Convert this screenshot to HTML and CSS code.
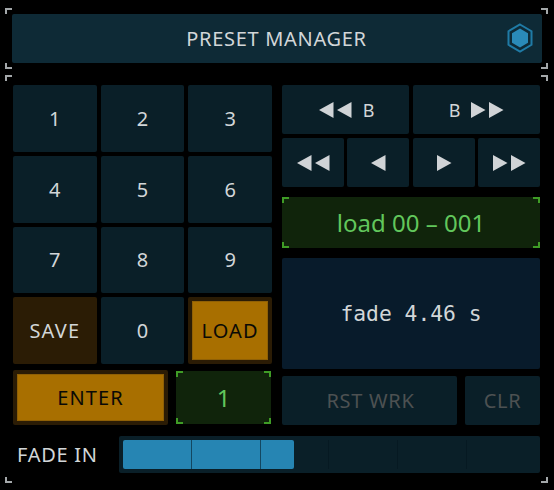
FILE: index.html
```html
<!DOCTYPE html>
<html lang="en">
<head>
  <meta charset="UTF-8">
  <meta name="viewport" content="width=device-width, initial-scale=1.0">
  <title>Preset Manager</title>
  <link rel="stylesheet" href="styles.css">
</head>
<body>

  <div class="frame frame-top">
    <i class="mark tl"></i><i class="mark tr"></i><i class="mark bl"></i><i class="mark br"></i>
    <div class="header">
      <span>PRESET MANAGER</span>
      <svg class="hex" width="26" height="30" viewBox="0 0 26 30">
        <polygon points="13,1.5 24.5,8.2 24.5,21.8 13,28.5 1.5,21.8 1.5,8.2" fill="none" stroke="#1f7ba6" stroke-width="2"/>
        <polygon points="13,5.5 21,10.2 21,19.8 13,24.5 5,19.8 5,10.2" fill="#2a8ab8"/>
      </svg>
    </div>
  </div>

  <div class="frame frame-main">
    <i class="mark tl"></i><i class="mark tr"></i><i class="mark bl"></i><i class="mark br"></i>

    <div class="columns">
      <div class="left">
        <div class="keypad">
          <button class="btn btn-num">1</button>
          <button class="btn btn-num">2</button>
          <button class="btn btn-num">3</button>
          <button class="btn btn-num">4</button>
          <button class="btn btn-num">5</button>
          <button class="btn btn-num">6</button>
          <button class="btn btn-num">7</button>
          <button class="btn btn-num">8</button>
          <button class="btn btn-num">9</button>
          <button class="btn btn-save">SAVE</button>
          <button class="btn btn-num">0</button>
          <button class="btn btn-amber">LOAD</button>
        </div>
        <div class="enter-row">
          <button class="btn btn-amber btn-enter">ENTER</button>
          <div class="lcd lcd-small">
            <i class="tick tl"></i><i class="tick tr"></i><i class="tick bl"></i><i class="tick br"></i>
            1
          </div>
        </div>
      </div>

      <div class="right">
        <div class="transport">
          <button class="btn btn-t btn-half btn-back">
            <svg width="33" height="16" viewBox="0 0 33 16"><polygon points="14.5,0 14.5,16 0,8"/><polygon points="32.5,0 32.5,16 18,8"/></svg>
            <span>B</span>
          </button>
          <button class="btn btn-t btn-half">
            <span>B</span>
            <svg width="33" height="16" viewBox="0 0 33 16"><polygon points="0,0 0,16 14.5,8"/><polygon points="18,0 18,16 32.5,8"/></svg>
          </button>
        </div>
        <div class="transport">
          <div class="pair">
            <button class="btn btn-t">
              <svg width="33" height="16" viewBox="0 0 33 16"><polygon points="14.5,0 14.5,16 0,8"/><polygon points="32.5,0 32.5,16 18,8"/></svg>
            </button>
            <button class="btn btn-t">
              <svg width="15" height="16" viewBox="0 0 15 16"><polygon points="14.5,0 14.5,16 0,8"/></svg>
            </button>
          </div>
          <div class="pair">
            <button class="btn btn-t">
              <svg width="15" height="16" viewBox="0 0 15 16"><polygon points="0,0 0,16 14.5,8"/></svg>
            </button>
            <button class="btn btn-t">
              <svg width="33" height="16" viewBox="0 0 33 16"><polygon points="0,0 0,16 14.5,8"/><polygon points="18,0 18,16 32.5,8"/></svg>
            </button>
          </div>
        </div>
        <div class="lcd lcd-wide">
          <i class="tick tl"></i><i class="tick tr"></i><i class="tick bl"></i><i class="tick br"></i>
          load 00 – 001
        </div>
        <div class="readout">fade 4.46 s</div>
        <div class="reset-row">
          <button class="btn btn-off btn-rst">RST WRK</button>
          <button class="btn btn-off btn-clr">CLR</button>
        </div>
      </div>
    </div>

    <div class="fade-row">
      <span class="fade-label">FADE IN</span>
      <div class="track">
        <div class="fill" style="width: 171px"></div>
        <div class="seg"></div>
        <div class="seg"></div>
        <div class="seg"></div>
        <div class="seg"></div>
        <div class="seg"></div>
        <div class="seg"></div>
      </div>
    </div>
  </div>

</body>
</html>
```

FILE: styles.css
```css
* {
  box-sizing: border-box;
}
body {
  margin: 0;
  background-color: #000;
  color: #d2d6d8;
  font-family: 'Noto Sans', 'Open Sans', sans-serif;
  font-size: 20px;
  letter-spacing: 0.7px;
  overflow: hidden;
}

/* section frames with the grey corner marks */
.frame {
  position: relative;
  width: 543px;
  margin-left: 5px;
}
.frame-top {
  margin-top: 8px;
  height: 61px;
  padding: 6px 6px 6px 7px;
}
.frame-main {
  margin-top: 6px;
  height: 408px;
  padding: 10px 8px 0 8px;
}
.mark {
  position: absolute;
  width: 7px;
  height: 6px;
  border: 0 solid #a4a8aa;
}
.mark.tl { top: 0; left: 0; border-width: 2px 0 0 2px; }
.mark.tr { top: 0; right: 0; border-width: 2px 2px 0 0; }
.mark.bl { bottom: 0; left: 0; border-width: 0 0 2px 2px; }
.mark.br { bottom: 0; right: 0; border-width: 0 2px 2px 0; }

.header {
  position: relative;
  height: 49px;
  background-color: #0e2a36;
  border-radius: 2px;
  display: flex;
  align-items: center;
  justify-content: center;
  padding-right: 1px;
}
.hex {
  position: absolute;
  right: 9.5px;
  top: 9px;
}

.columns {
  display: flex;
  gap: 10px;
}
.left {
  width: 259px;
}
.right {
  width: 258px;
  display: flex;
  flex-direction: column;
}

.btn {
  font: inherit;
  letter-spacing: inherit;
  color: inherit;
  border: none;
  border-radius: 2px;
  background-color: #0a1f28;
  padding: 0;
}
.btn-num {
  letter-spacing: 0;
}

.keypad {
  display: grid;
  grid-template-columns: repeat(3, 1fr);
  grid-template-rows: repeat(4, 66.75px);
  gap: 4px;
}
.btn-save {
  background-color: #2b1c05;
  letter-spacing: 1.2px;
}
.btn-amber {
  background-color: #a86f00;
  border: 4px solid #2b1c05;
  color: #0a0a06;
  letter-spacing: 1.1px;
  box-shadow: inset 0 0 0 1px #8f6006;
}
.enter-row {
  display: flex;
  margin-top: 6px;
  gap: 8px;
  align-items: center;
}
.btn-enter {
  width: 155px;
  height: 55px;
}

.lcd {
  position: relative;
  background-color: #10240b;
  color: #62c75c;
  display: flex;
  align-items: center;
  justify-content: center;
  letter-spacing: 0;
}
.lcd-small {
  width: 95px;
  height: 53px;
  font-size: 24px;
}
.lcd-wide {
  height: 51px;
  margin-top: 10px;
  font-size: 24px;
}
.tick {
  position: absolute;
  width: 7px;
  height: 6px;
  border: 0 solid #3f9c26;
}
.tick.tl { top: 0; left: 0; border-width: 2px 0 0 2px; }
.tick.tr { top: 0; right: 0; border-width: 2px 2px 0 0; }
.tick.bl { bottom: 0; left: 0; border-width: 0 0 2px 2px; }
.tick.br { bottom: 0; right: 0; border-width: 0 2px 2px 0; }

.transport {
  display: flex;
  gap: 4px;
  height: 49px;
  margin-bottom: 4px;
}
.pair {
  width: 127px;
  display: flex;
  gap: 3px;
}
.pair .btn-t {
  width: 62px;
}
.btn-half {
  width: 127px;
}
.transport + .lcd {
  margin-top: 6px;
}
.btn-t {
  display: flex;
  align-items: center;
  justify-content: center;
  gap: 11px;
  font-size: 18px;
  letter-spacing: 0;
}
.btn-back {
  padding-left: 2px;
}
.btn-t svg {
  fill: #d0d3d6;
}

.readout {
  height: 111px;
  margin-top: 10px;
  background-color: #081b2b;
  border-radius: 2px;
  display: flex;
  align-items: center;
  justify-content: center;
  font-family: 'DejaVu Sans Mono', 'Liberation Mono', monospace;
  font-size: 21.33px;
  letter-spacing: 0;
}
.reset-row {
  display: flex;
  gap: 8px;
  margin-top: 7px;
}
.btn-off {
  height: 49px;
  color: #4d5152;
}
.btn-rst {
  width: 175px;
  padding-left: 2px;
}
.btn-clr {
  width: 75px;
}

.fade-row {
  display: flex;
  align-items: center;
  margin-top: 11px;
}
.fade-label {
  width: 106px;
  padding-left: 4px;
}
.track {
  position: relative;
  width: 421px;
  height: 37px;
  background-color: #0a1f28;
  border-radius: 2px;
  padding: 4px;
  display: flex;
}
.fill {
  position: absolute;
  left: 4px;
  top: 4px;
  bottom: 4px;
  background-color: #2685b3;
  border-radius: 2px;
}
.seg {
  position: relative;
  width: 69.3px;
  border-right: 1px solid rgba(4, 20, 30, 0.55);
}
.seg:last-child {
  border-right: none;
}
```
